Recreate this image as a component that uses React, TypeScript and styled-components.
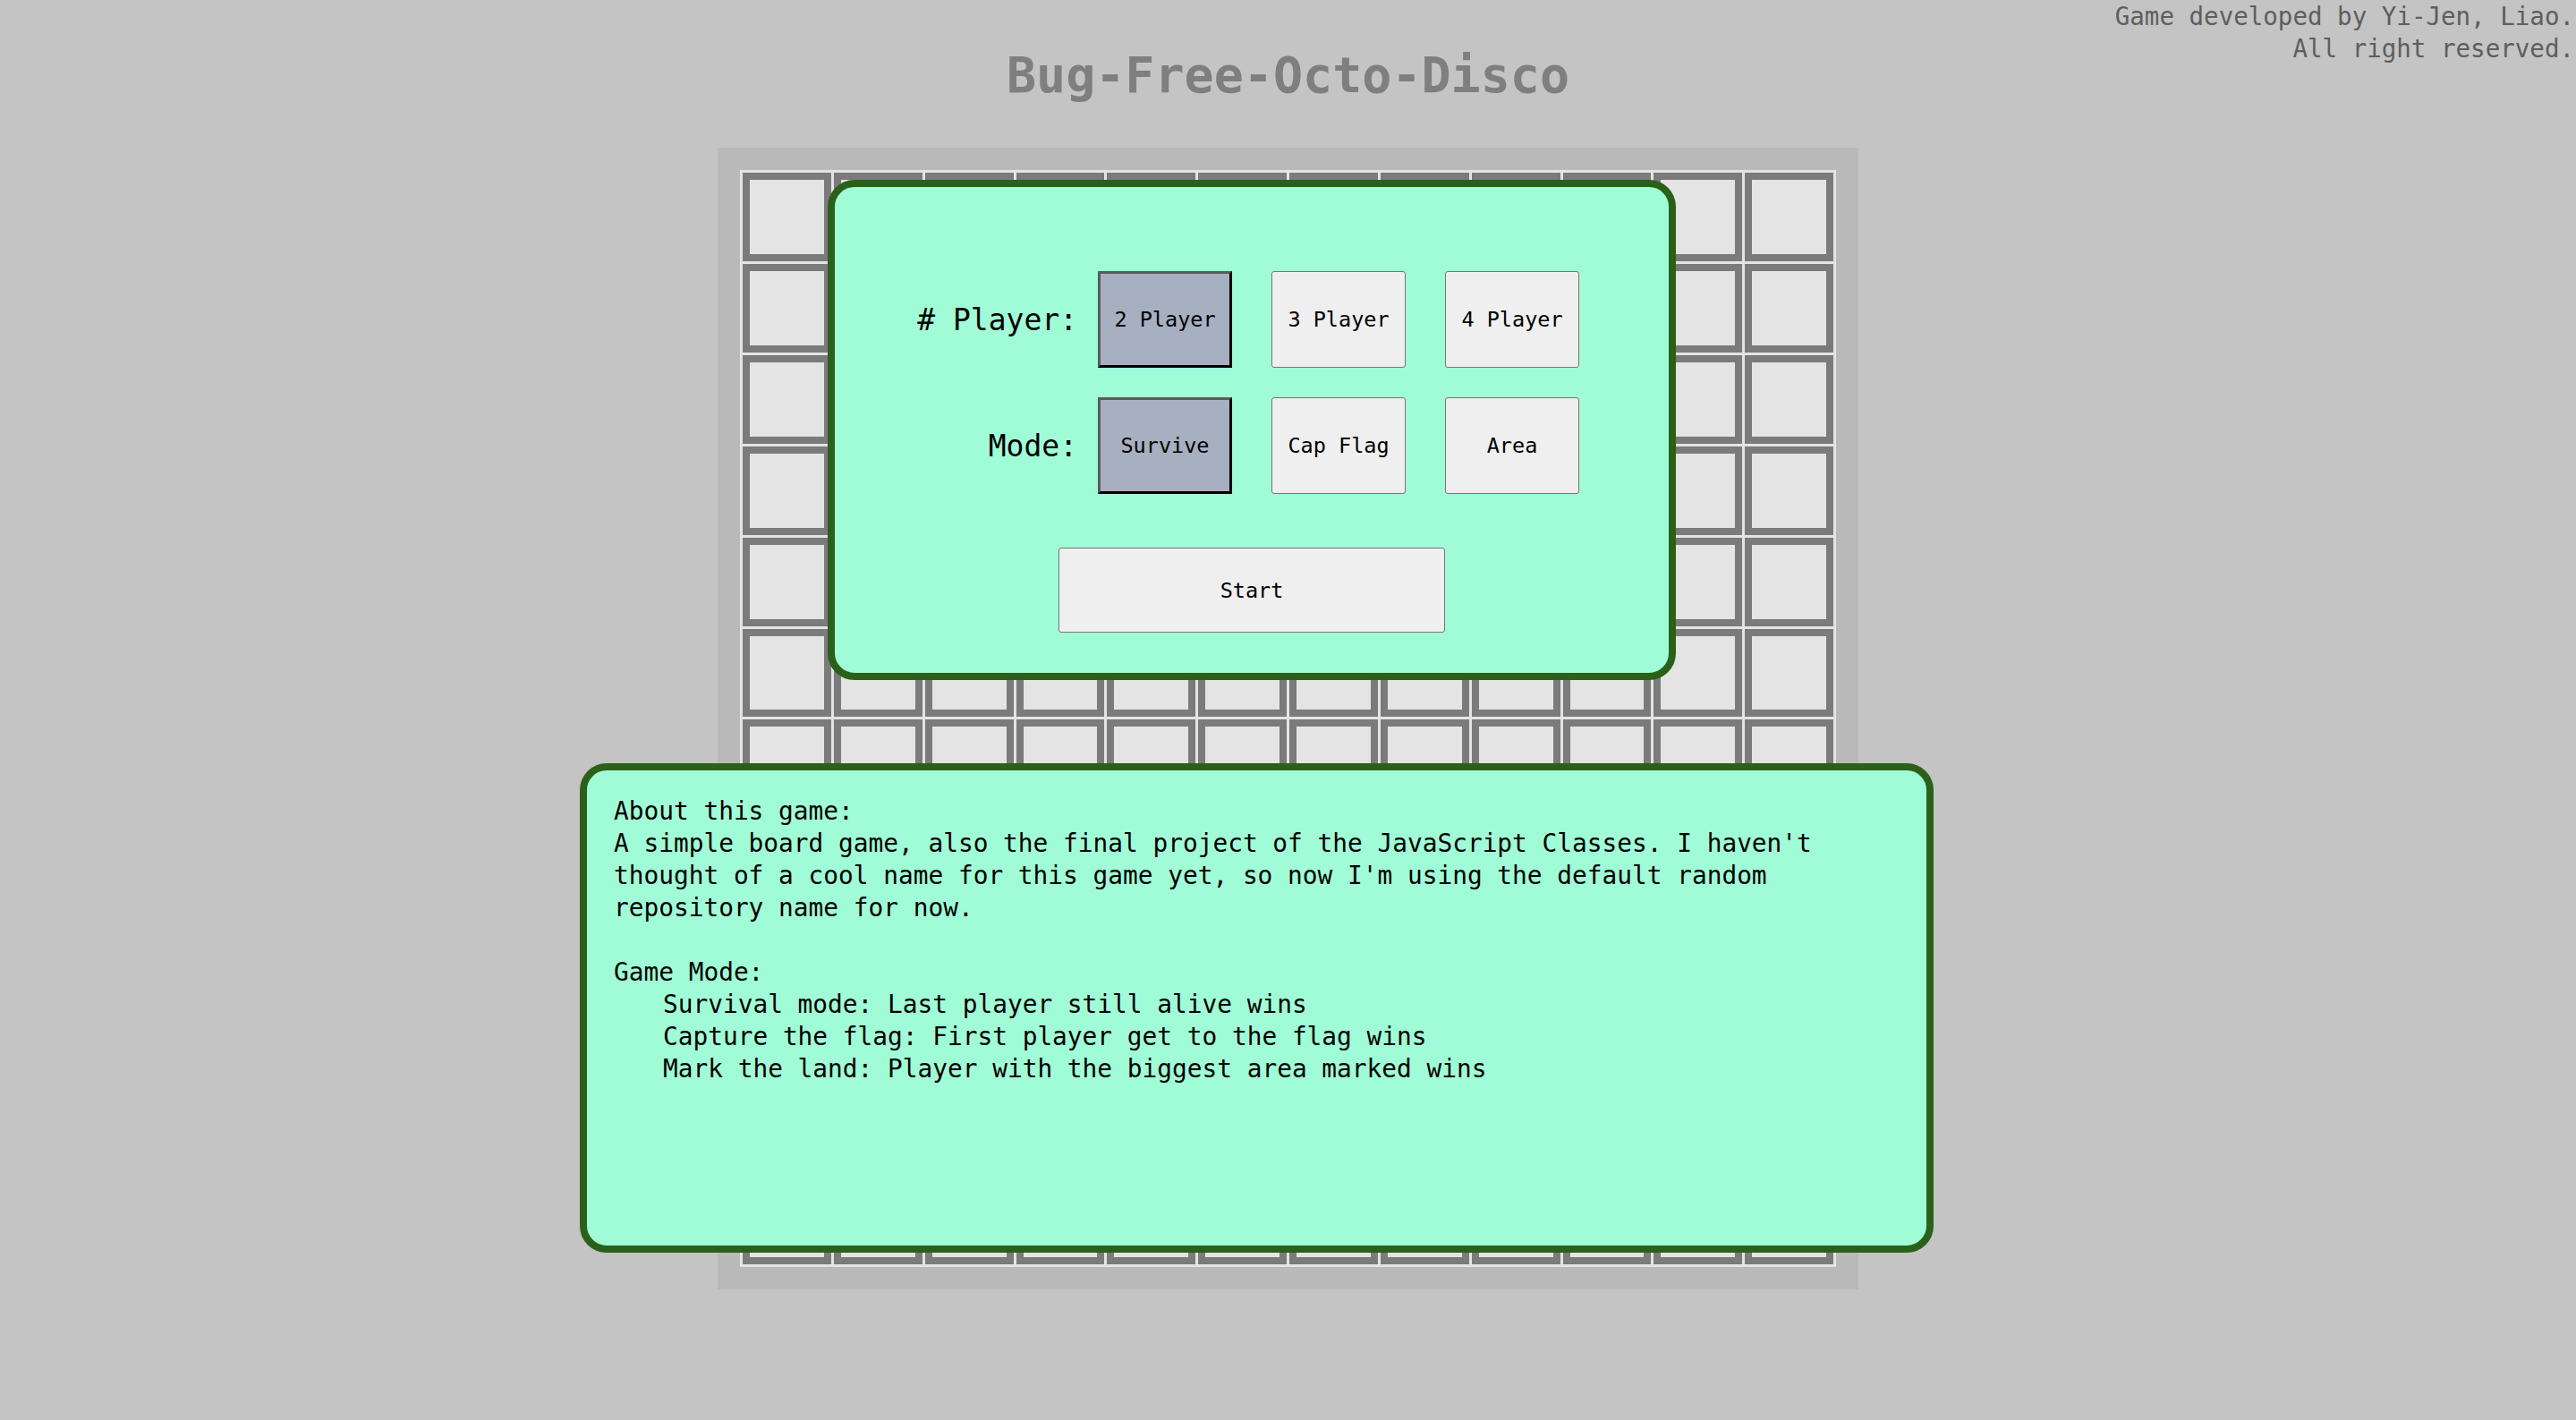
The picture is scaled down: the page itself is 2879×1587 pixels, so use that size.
import React from "react";
import styled, { createGlobalStyle } from "styled-components";

const Global = createGlobalStyle`
  html, body { margin: 0; padding: 0; background: #c4c4c4; }
  body { font-family: "DejaVu Sans Mono", "Liberation Mono", monospace; overflow: hidden; }
`;

const Page = styled.div`
  position: relative;
  display: flow-root;
  width: 100%;
  min-height: 1587px;
  background: #c4c4c4;
`;

const Credit = styled.div`
  position: absolute;
  top: 0;
  right: 2px;
  text-align: right;
  font-size: 27.5px;
  line-height: 36px;
  color: #5e5e5e;
  white-space: pre;
`;

const Title = styled.h1`
  margin: 56px 0 53px;
  height: 56px;
  text-align: center;
  font-family: "DejaVu Sans Mono", monospace;
  font-weight: bold;
  font-size: 55px;
  line-height: 56px;
  color: #7f7f7f;
`;

const Board = styled.div`
  position: relative;
  width: 1275px;
  height: 1276px;
  box-sizing: border-box;
  margin: 0 auto;
  padding: 25px;
  background: #b9b9b9;
`;

const Grid = styled.div`
  display: grid;
  grid-template-columns: repeat(12, 1fr);
  grid-template-rows: repeat(12, 1fr);
  gap: 3px;
  padding: 3px;
  width: 1225px;
  height: 1226px;
  box-sizing: border-box;
  background: #e4e4e4;
`;

const Cell = styled.div`
  box-sizing: border-box;
  border: 8px solid #7b7b7b;
  background: #e4e4e4;
`;

const Panel = styled.div<{ $left: number; $top: number; $w: number; $h?: number }>`
  position: absolute;
  left: ${(p) => p.$left}px;
  top: ${(p) => p.$top}px;
  width: ${(p) => p.$w}px;
  ${(p) => (p.$h ? `height: ${p.$h}px;` : "")}
  box-sizing: border-box;
  background: #a0fbd7;
  border: 8px solid #2b6019;
  border-radius: 30px;
`;

const Menu = styled.div`
  display: flex;
  flex-direction: column;
  padding: 94px 0 45px;
`;

const OptionRow = styled.div<{ $gap?: number }>`
  display: flex;
  align-items: center;
  height: 108px;
  margin-bottom: ${(p) => p.$gap ?? 0}px;
`;

const Label = styled.div`
  width: 271px;
  text-align: right;
  font-size: 33px;
  color: #000;
  white-space: pre;
`;

const Choices = styled.div`
  display: flex;
  gap: 44px;
  margin-left: 23px;
  height: 100%;
`;

const Choice = styled.button<{ $selected?: boolean }>`
  width: 150px;
  height: 100%;
  box-sizing: border-box;
  padding: 0;
  font-family: "DejaVu Sans Mono", monospace;
  font-size: 23.5px;
  color: #000;
  cursor: pointer;
  background: ${(p) => (p.$selected ? "#a6b0c0" : "#efefef")};
  border-style: solid;
  border-width: ${(p) => (p.$selected ? "3px" : "1px")};
  border-color: ${(p) =>
    p.$selected ? "#5b5b5b #000 #000 #5b5b5b" : "#767676"};
  border-radius: ${(p) => (p.$selected ? "0" : "3px")};
`;

const StartButton = styled.button`
  align-self: center;
  margin-top: 60px;
  width: 432px;
  height: 95px;
  box-sizing: border-box;
  font-family: "DejaVu Sans Mono", monospace;
  font-size: 23.5px;
  color: #000;
  background: #efefef;
  border: 1px solid #767676;
  border-radius: 3px;
  cursor: pointer;
`;

const About = styled.div`
  padding: 28px 30px;
  font-size: 27.8px;
  line-height: 36px;
  color: #000;
  white-space: pre;
`;

const Indented = styled.div`
  padding-left: 55px;
`;

const cells = Array.from({ length: 144 }, (_, i) => i);

export default function App() {
  return (
    <Page>
      <Global />
      <Credit>{"Game developed by Yi-Jen, Liao.\nAll right reserved."}</Credit>
      <Title>Bug-Free-Octo-Disco</Title>
      <Board>
        <Grid>
          {cells.map((i) => (
            <Cell key={i} />
          ))}
        </Grid>
        <Panel $left={123} $top={36} $w={948}>
          <Menu>
            <OptionRow $gap={33}>
              <Label># Player:</Label>
              <Choices>
                <Choice $selected>2 Player</Choice>
                <Choice>3 Player</Choice>
                <Choice>4 Player</Choice>
              </Choices>
            </OptionRow>
            <OptionRow>
              <Label>Mode:</Label>
              <Choices>
                <Choice $selected>Survive</Choice>
                <Choice>Cap Flag</Choice>
                <Choice>Area</Choice>
              </Choices>
            </OptionRow>
            <StartButton>Start</StartButton>
          </Menu>
        </Panel>
        <Panel $left={-154} $top={688} $w={1513} $h={547}>
          <About>
            <div>About this game:</div>
            <div>A simple board game, also the final project of the JavaScript Classes. I haven't</div>
            <div>thought of a cool name for this game yet, so now I'm using the default random</div>
            <div>repository name for now.</div>
            <div>{" "}</div>
            <div>Game Mode:</div>
            <Indented>Survival mode: Last player still alive wins</Indented>
            <Indented>Capture the flag: First player get to the flag wins</Indented>
            <Indented>Mark the land: Player with the biggest area marked wins</Indented>
          </About>
        </Panel>
      </Board>
    </Page>
  );
}
